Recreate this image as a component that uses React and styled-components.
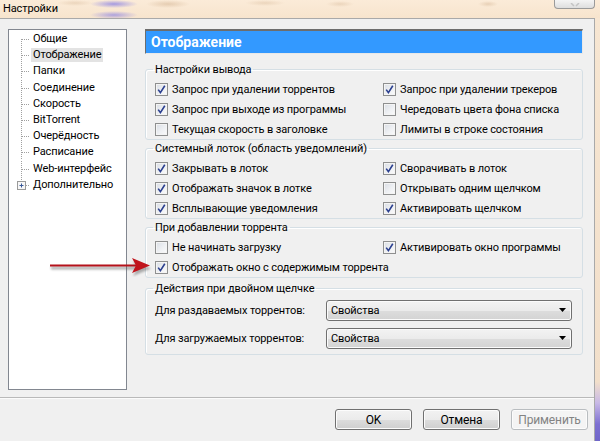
import React from "react";
import styled, { createGlobalStyle } from "styled-components";

const Global = createGlobalStyle`
  html, body { margin: 0; padding: 0; }
  body { font-family: Roboto, "Noto Sans", sans-serif; font-size: 11px; letter-spacing: -0.12px; color: #000; }
`;

const Page = styled.div`
  position: relative;
  width: 600px;
  height: 441px;
  overflow: hidden;
  display: flex;
  flex-direction: column;
  background: #f6e4cf;
`;

const TitleBar = styled.div`
  height: 18px;
  flex: none;
  display: flex;
  align-items: center;
  padding-left: 3px;
  background:
    radial-gradient(ellipse 24px 4px at 114px 4px, rgba(150,140,225,0.85), rgba(150,140,225,0) 100%),
    radial-gradient(ellipse 24px 4px at 114px 15px, rgba(150,140,225,0.75), rgba(150,140,225,0) 100%),
    radial-gradient(ellipse 22px 4px at 168px 4px, rgba(190,150,110,0.35), rgba(190,150,110,0) 100%),
    radial-gradient(ellipse 18px 3px at 75px 3px, rgba(190,150,110,0.25), rgba(190,150,110,0) 100%),
    radial-gradient(ellipse 20px 3px at 265px 3px, rgba(190,150,110,0.25), rgba(190,150,110,0) 100%),
    radial-gradient(ellipse 14px 3px at 340px 4px, rgba(190,150,110,0.25), rgba(190,150,110,0) 100%),
    radial-gradient(ellipse 10px 3px at 488px 4px, rgba(190,150,110,0.3), rgba(190,150,110,0) 100%),
    linear-gradient(180deg, #fbebd8 0%, #f7e4cd 100%);
  color: #000;
`;

const TitleText = styled.span`
  line-height: 16px;
  font-size: 11px;
`;

const CloseButton = styled.div`
  margin-left: auto;
  margin-right: 5px;
  align-self: flex-start;
  width: 39px;
  height: 8px;
  border: 1px solid #9a9a9a;
  border-top: none;
  border-radius: 0 0 4px 4px;
  background: linear-gradient(180deg, #f4f4f4, #dedede);
  display: flex;
  justify-content: center;
  align-items: flex-end;
`;

const Main = styled.div`
  flex: 1;
  display: flex;
`;

const Window = styled.div`
  width: 594px;
  flex: none;
  display: flex;
  flex-direction: column;
  background: #f0f0f0;
  border-top: 1px solid #a9a9a9;
  border-right: 1px solid #a9a9a9;
`;

const Strip = styled.div`
  flex: 1;
  background: linear-gradient(180deg, #f7e6d2 0%, #f2dfca 86%, #c8b9e6 91%, #7d70d2 96%, #6f66c9 100%);
`;

const Content = styled.div`
  display: flex;
  gap: 18px;
  padding: 10px 0 0 8px;
`;

const Tree = styled.div`
  width: 117px;
  height: 358px;
  flex: none;
  background: #fff;
  border: 1px solid #828790;
  padding-top: 1px;
  box-sizing: content-box;
`;

const TreeItem = styled.div`
  height: 16.2px;
  display: flex;
  align-items: center;
  padding-left: 7px;
`;

const TreeLabel = styled.span`
  padding: 0 2px;
  line-height: 14px;
  background: ${(p) => (p.$selected ? "#e3e3e3" : "transparent")};
  white-space: nowrap;
`;

const Panel = styled.div`
  width: 438px;
  flex: none;
  display: flex;
  flex-direction: column;
`;

const Header = styled.div`
  height: 25px;
  box-sizing: border-box;
  background: #3399ff;
  border-top: 2px solid #6d6d6d;
  border-left: 1px solid #6d6d6d;
  border-bottom: 1px solid #e8e8e8;
  border-right: 1px solid #e8e8e8;
  color: #fff;
  font-weight: bold;
  font-size: 14px;
  letter-spacing: 0;
  display: flex;
  align-items: center;
  padding-left: 5px;
`;

const Group = styled.fieldset`
  margin: ${(p) => p.$mt}px 0 0 0;
  min-width: 0;
  border: 1px solid #d5dfe5;
  border-radius: 3px;
  box-shadow: inset 1px 1px 0 #fff;
  padding: ${(p) => p.$pt}px 10px ${(p) => p.$pb}px 9px;
`;

const Legend = styled.legend`
  padding: 0 2px;
  margin-left: -2px;
  line-height: 15px;
`;

const CheckGrid = styled.div`
  display: grid;
  grid-template-columns: 228px 1fr;
  grid-auto-rows: 20px;
`;

const CheckRow = styled.label`
  display: flex;
  align-items: center;
  gap: 3px;
  white-space: nowrap;
`;

const Box = styled.span`
  width: 11px;
  height: 11px;
  flex: none;
  border: 1px solid #8e8f8f;
  background: linear-gradient(135deg, #d9dde4 0%, #eef0f3 55%, #fbfbfb 100%);
  box-shadow: inset 0 0 0 1px #f4f4f4;
  display: flex;
  align-items: center;
  justify-content: center;
  margin-right: 1px;
`;

const FormRow = styled.div`
  height: 28px;
  display: flex;
  align-items: center;
`;

const FormLabel = styled.span`
  width: 171px;
  flex: none;
  white-space: nowrap;
`;

const Dropdown = styled.div`
  width: 238px;
  height: 19px;
  border: 1px solid #707070;
  border-radius: 3px;
  background: linear-gradient(180deg, #f3f3f3 0%, #ebebeb 50%, #dddddd 51%, #d3d3d3 100%);
  box-shadow: inset 0 0 0 1px #fbfbfb;
  display: flex;
  align-items: center;
  padding: 0 5px 0 4px;
  justify-content: space-between;
`;

const Separator = styled.div`
  margin-top: 7px;
  height: 1px;
  background: #b9b9b9;
  border-bottom: 1px solid #fbfbfb;
`;

const ButtonBar = styled.div`
  display: flex;
  justify-content: flex-end;
  gap: 11px;
  padding: 10px 6px 0 0;
`;

const Button = styled.div`
  width: 75px;
  height: 19px;
  border: 1px solid ${(p) => (p.$disabled ? "#b9bdc0" : "#707070")};
  border-radius: 3px;
  background: ${(p) =>
    p.$disabled
      ? "#f4f4f4"
      : "linear-gradient(180deg, #f2f2f2 0%, #ebebeb 50%, #dddddd 51%, #cfcfcf 100%)"};
  box-shadow: inset 0 0 0 1px #fcfcfc;
  color: ${(p) => (p.$disabled ? "#838383" : "#000")};
  font-size: 12px;
  display: flex;
  align-items: center;
  justify-content: center;
`;

const Arrow = styled.svg`
  position: absolute;
  left: 46px;
  top: 255px;
`;

const Check = () => (
  <svg width="9" height="9" viewBox="0 0 9 9">
    <path d="M1.2 4.6 L3.4 7.6 L7.8 0.8" fill="none" stroke="#2b3f8f" strokeWidth="1.6" />
  </svg>
);

const CheckBox = ({ checked, children }) => (
  <CheckRow>
    <Box>{checked && <Check />}</Box>
    {children}
  </CheckRow>
);

const Guide = ({ first, last, plus }) => (
  <svg width="14" height="16" viewBox="0 0 14 16" style={{ flex: "none", marginRight: 1 }}>
    {!plus && (
      <line x1="5.5" y1={first ? 8 : 0} x2="5.5" y2={last ? 8 : 16} stroke="#a0a0a0" strokeDasharray="1 1" />
    )}
    {plus && <line x1="5.5" y1="0" x2="5.5" y2="4" stroke="#a0a0a0" strokeDasharray="1 1" />}
    <line x1={plus ? 10 : 6} y1="8.5" x2="14" y2="8.5" stroke="#a0a0a0" strokeDasharray="1 1" />
    {plus && (
      <g>
        <rect x="1.5" y="4.5" width="8" height="8" fill="#f7f7f7" stroke="#9a9a9a" />
        <line x1="3.5" y1="8.5" x2="7.5" y2="8.5" stroke="#3a5a9a" />
        <line x1="5.5" y1="6.5" x2="5.5" y2="10.5" stroke="#3a5a9a" />
      </g>
    )}
  </svg>
);

const treeItems = [
  "Общие",
  "Отображение",
  "Папки",
  "Соединение",
  "Скорость",
  "BitTorrent",
  "Очерёдность",
  "Расписание",
  "Web-интерфейс",
  "Дополнительно",
];

export default function App() {
  return (
    <Page>
      <Global />
      <TitleBar>
        <TitleText>Настройки</TitleText>
        <CloseButton>
          <svg width="10" height="5" viewBox="0 0 10 5">
            <path d="M1 0 L4 3 M9 0 L6 3" stroke="#c4c4c4" strokeWidth="1.5" fill="none" />
          </svg>
        </CloseButton>
      </TitleBar>
      <Main>
        <Window>
          <Content>
            <Tree>
              {treeItems.map((t, i) => (
                <TreeItem key={t}>
                  <Guide first={i === 0} last={i === treeItems.length - 1} plus={i === treeItems.length - 1} />
                  <TreeLabel $selected={i === 1}>{t}</TreeLabel>
                </TreeItem>
              ))}
            </Tree>
            <Panel>
              <Header>Отображение</Header>
              <Group $mt={8} $pt={2} $pb={0}>
                <Legend>Настройки вывода</Legend>
                <CheckGrid>
                  <CheckBox checked>Запрос при удалении торрентов</CheckBox>
                  <CheckBox checked>Запрос при удалении трекеров</CheckBox>
                  <CheckBox checked>Запрос при выходе из программы</CheckBox>
                  <CheckBox>Чередовать цвета фона списка</CheckBox>
                  <CheckBox>Текущая скорость в заголовке</CheckBox>
                  <CheckBox>Лимиты в строке состояния</CheckBox>
                </CheckGrid>
              </Group>
              <Group $mt={1} $pt={2} $pb={0}>
                <Legend>Системный лоток (область уведомлений)</Legend>
                <CheckGrid>
                  <CheckBox checked>Закрывать в лоток</CheckBox>
                  <CheckBox checked>Сворачивать в лоток</CheckBox>
                  <CheckBox checked>Отображать значок в лотке</CheckBox>
                  <CheckBox>Открывать одним щелчком</CheckBox>
                  <CheckBox checked>Всплывающие уведомления</CheckBox>
                  <CheckBox checked>Активировать щелчком</CheckBox>
                </CheckGrid>
              </Group>
              <Group $mt={1} $pt={2} $pb={0}>
                <Legend>При добавлении торрента</Legend>
                <CheckGrid>
                  <CheckBox>Не начинать загрузку</CheckBox>
                  <CheckBox checked>Активировать окно программы</CheckBox>
                  <CheckBox checked>Отображать окно с содержимым торрента</CheckBox>
                </CheckGrid>
              </Group>
              <Group $mt={3} $pt={0} $pb={2}>
                <Legend>Действия при двойном щелчке</Legend>
                <FormRow>
                  <FormLabel>Для раздаваемых торрентов:</FormLabel>
                  <Dropdown>
                    <span>Свойства</span>
                    <svg width="7" height="4" viewBox="0 0 7 4"><path d="M0 0 H7 L3.5 4 Z" fill="#000" /></svg>
                  </Dropdown>
                </FormRow>
                <FormRow>
                  <FormLabel>Для загружаемых торрентов:</FormLabel>
                  <Dropdown>
                    <span>Свойства</span>
                    <svg width="7" height="4" viewBox="0 0 7 4"><path d="M0 0 H7 L3.5 4 Z" fill="#000" /></svg>
                  </Dropdown>
                </FormRow>
              </Group>
            </Panel>
          </Content>
          <Separator />
          <ButtonBar>
            <Button>OK</Button>
            <Button>Отмена</Button>
            <Button $disabled>Применить</Button>
          </ButtonBar>
        </Window>
        <Strip />
      </Main>
      <Arrow width="110" height="22" viewBox="0 0 110 22">
        <defs>
          <filter id="sh" x="-10%" y="-50%" width="120%" height="200%">
            <feGaussianBlur stdDeviation="1.3" />
          </filter>
        </defs>
        <g filter="url(#sh)" opacity="0.45" transform="translate(1 3)">
          <path d="M4 10 L90 10" stroke="#555" strokeWidth="3" />
          <path d="M86 3 L104 10.5 L86 18 L90 10.5 Z" fill="#555" />
        </g>
        <path d="M4 10.5 L90 10.5" stroke="#b5121b" strokeWidth="2" />
        <path d="M86 3 L104 10.5 L86 18 L90 10.5 Z" fill="#c0141c" />
      </Arrow>
    </Page>
  );
}
